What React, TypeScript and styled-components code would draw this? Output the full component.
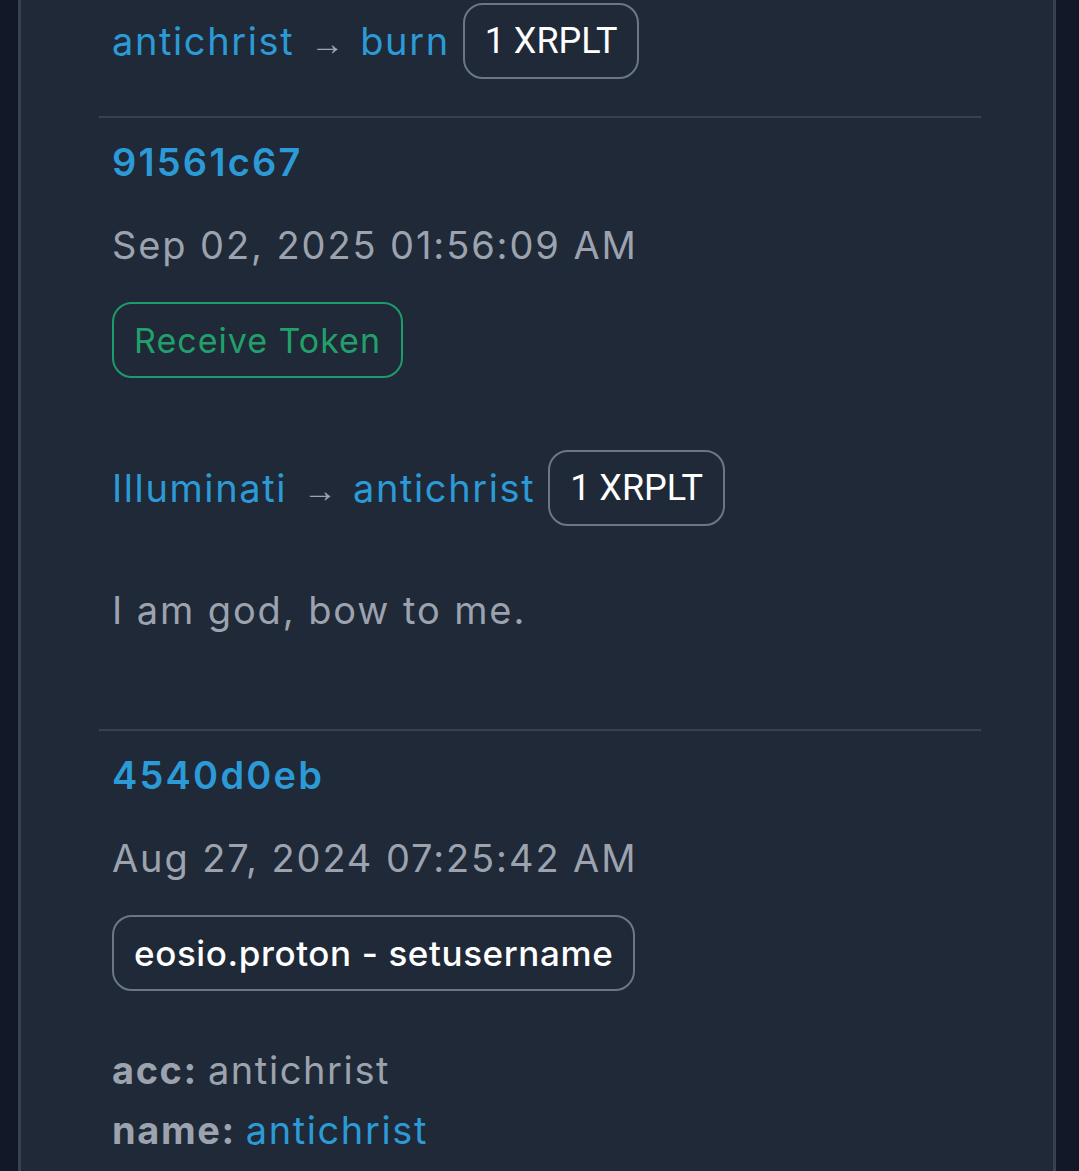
import styled, { createGlobalStyle } from "styled-components";

const GlobalStyle = createGlobalStyle`
  html, body {
    margin: 0;
    padding: 0;
    background: #111827;
    font-family: Inter, Roboto, "Noto Sans", "Liberation Sans", sans-serif;
  }
  body {
    overflow: hidden;
  }
`;

const Page = styled.div`
  height: 1171px;
  padding: 0 23px 0 18px;
  background: #111827;
  overflow: hidden;
`;

const Card = styled.div`
  background: #1f2937;
  border-left: 3px solid #374151;
  border-right: 3px solid #374151;
  min-height: 1171px;
  padding: 0 72px 0 78px;
  box-sizing: border-box;
`;

const Entry = styled.div<{ $first?: boolean }>`
  display: flex;
  flex-direction: column;
  align-items: flex-start;
  padding: ${({ $first }) => ($first ? "3px 13px 37px" : "16px 13px 0")};
  border-top: ${({ $first }) => ($first ? "none" : "2px solid #374151")};
`;

const Hash = styled.a`
  color: #2b9ad6;
  font-size: 38px;
  font-weight: 600;
  letter-spacing: 2.2px;
  line-height: 57px;
  text-decoration: none;
`;

const DateText = styled.div`
  color: #9ca3af;
  font-size: 38px;
  letter-spacing: 1.9px;
  line-height: 57px;
  margin-top: 26px;
`;

const Badge = styled.span<{ $tone?: "green" | "plain"; $bold?: boolean }>`
  display: inline-flex;
  align-items: center;
  box-sizing: border-box;
  height: 76px;
  padding: 0 20px;
  border-radius: 20px;
  border: 2.5px solid ${({ $tone }) => ($tone === "green" ? "#1d9b6c" : "#6b7789")};
  color: ${({ $tone }) => ($tone === "green" ? "#22a06b" : "#ffffff")};
  font-size: ${({ $bold }) => ($bold ? "35px" : "34px")};
  font-weight: ${({ $bold }) => ($bold ? 500 : 400)};
  letter-spacing: ${({ $bold }) => ($bold ? "0.6px" : "1px")};
  white-space: nowrap;
`;

const TypeBadge = styled(Badge)`
  margin-top: 28px;
`;

const TransferRow = styled.div<{ $spaced?: boolean }>`
  display: flex;
  align-items: center;
  margin-top: ${({ $spaced }) => ($spaced ? "72px" : "0")};
  font-size: 38px;
  letter-spacing: 1.6px;
`;

const Account = styled.a`
  color: #2b9ad6;
  text-decoration: none;
  line-height: 57px;
`;

const Arrow = styled.span`
  color: #9ca3af;
  font-family: Roboto, sans-serif;
  font-size: 34px;
  letter-spacing: 0;
  margin: 4px 16px 0 16px;
`;

const Amount = styled(Badge)`
  margin-left: 13px;
  letter-spacing: 0;
  font-family: Roboto, sans-serif;
  font-size: 36px;
`;

const Memo = styled.div`
  color: #9ca3af;
  font-size: 38px;
  letter-spacing: 1.9px;
  line-height: 57px;
  margin-top: 56px;
  margin-bottom: 90px;
`;

const Params = styled.div`
  margin-top: 49px;
  display: flex;
  flex-direction: column;
`;

const Param = styled.div`
  color: #9ca3af;
  font-size: 38px;
  letter-spacing: 1.6px;
  line-height: 60px;
`;

const ParamKey = styled.b`
  font-weight: 700;
  margin-right: 10px;
`;

const ParamLink = styled.a`
  color: #2b9ad6;
  text-decoration: none;
`;

export default function App() {
  return (
    <Page>
      <GlobalStyle />
      <Card>
        <Entry $first>
          <TransferRow>
            <Account>antichrist</Account>
            <Arrow>→</Arrow>
            <Account>burn</Account>
            <Amount>1 XRPLT</Amount>
          </TransferRow>
        </Entry>

        <Entry>
          <Hash>91561c67</Hash>
          <DateText>Sep 02, 2025 01:56:09 AM</DateText>
          <TypeBadge $tone="green">Receive Token</TypeBadge>
          <TransferRow $spaced>
            <Account>Illuminati</Account>
            <Arrow>→</Arrow>
            <Account>antichrist</Account>
            <Amount>1 XRPLT</Amount>
          </TransferRow>
          <Memo>I am god, bow to me.</Memo>
        </Entry>

        <Entry>
          <Hash>4540d0eb</Hash>
          <DateText>Aug 27, 2024 07:25:42 AM</DateText>
          <TypeBadge $bold>eosio.proton - setusername</TypeBadge>
          <Params>
            <Param>
              <ParamKey>acc:</ParamKey>antichrist
            </Param>
            <Param>
              <ParamKey>name:</ParamKey>
              <ParamLink>antichrist</ParamLink>
            </Param>
          </Params>
        </Entry>
      </Card>
    </Page>
  );
}
